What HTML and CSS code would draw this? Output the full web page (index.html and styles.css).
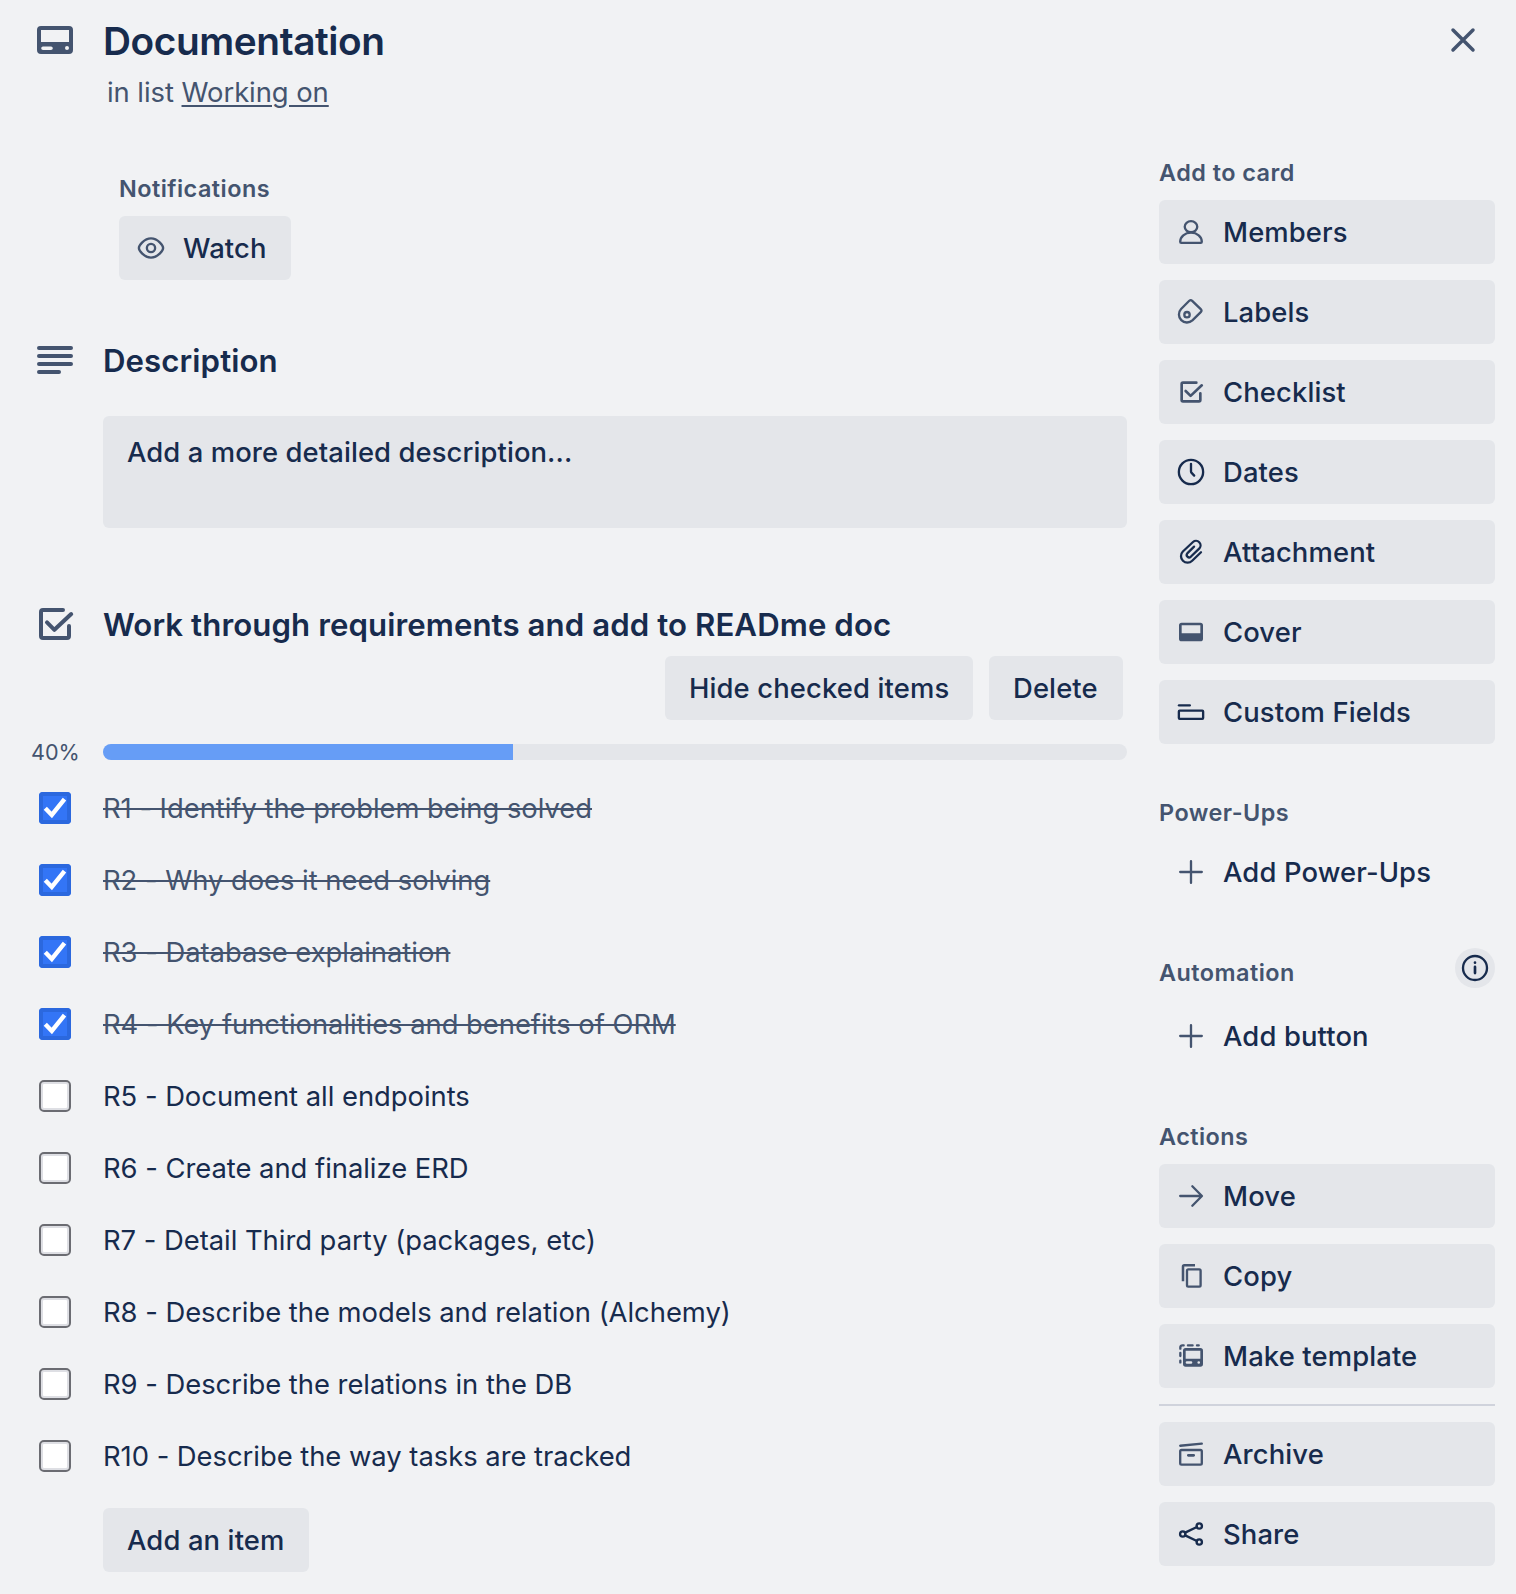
FILE: index.html
```html
<!DOCTYPE html>
<html lang="en">
<head>
<meta charset="utf-8">
<title>Documentation</title>
<link rel="stylesheet" href="styles.css">
</head>
<body>
<svg class="sprite" aria-hidden="true">
  <symbol id="i-card" viewBox="0 0 24 24"><path class="solid" fill-rule="evenodd" d="M5 5h14a2 2 0 0 1 2 2v10a2 2 0 0 1-2 2H5a2 2 0 0 1-2-2V7a2 2 0 0 1 2-2zM5 7v6h14V7zM6 15.200a.9.9 0 0 0 0 1.800h4a.9.9 0 0 0 0-1.800zM18 15a1 1 0 1 0 0 2 1 1 0 0 0 0-2z"/></symbol>
  <symbol id="i-text" viewBox="0 0 24 24"><path d="M4 6h16M4 10h16M4 14h16M4 18h10"/></symbol>
  <symbol id="i-check" viewBox="0 0 24 24"><path d="M16 5H6a1 1 0 0 0-1 1v12a1 1 0 0 0 1 1h12a1 1 0 0 0 1-1v-5M8 11.200l3.700 3.700L20.100 7"/></symbol>
  <symbol id="i-eye" viewBox="0 0 24 24"><path class="thin" d="M2.900 12c0-1.800 3.800-7.200 9.100-7.200s9.100 5.400 9.100 7.200-3.800 7.200-9.100 7.200S2.900 13.800 2.900 12z"/><circle class="thin" cx="12" cy="12" r="3.100"/></symbol>
  <symbol id="i-member" viewBox="0 0 24 24"><ellipse class="thin" cx="12" cy="8" rx="4.700" ry="4.100"/><path class="thin" d="M12 12.500c-4.600 0-8.100 3-8.100 6.800 0 .5.300.8.800.8h14.600c.5 0 .8-.3.800-.8 0-3.800-3.500-6.800-8.100-6.800z"/></symbol>
  <symbol id="i-label" viewBox="0 0 24 24"><path class="thin" d="M4.560 9.760 10.700 3.600q1.100-1 2.200 0L19.300 9.900q1.100 1.100 0 2.200L13.040 18.240A6 6 0 0 1 4.560 9.760z"/><circle class="thin" cx="9" cy="14" r="2"/></symbol>
  <symbol id="i-clock" viewBox="0 0 24 24"><circle class="thin" cx="12" cy="12" r="9.100"/><path class="thin" d="M12 5.900V11.700q0 .5.300.8l2.100 2.200"/></symbol>
  <symbol id="i-clip" viewBox="0 0 24 24"><path class="clip" d="M19.500 12.200l-6.600 6.400a4.950 4.950 0 0 1-7-7l7.600-7.100a3.400 3.400 0 0 1 4.800 4.800l-6.500 6.300a1.850 1.850 0 0 1-2.600-2.600l5.100-5"/></symbol>
  <symbol id="i-cover" viewBox="0 0 24 24"><path class="solid" fill-rule="evenodd" d="M5 5h14a2 2 0 0 1 2 2v10a2 2 0 0 1-2 2H5a2 2 0 0 1-2-2V7a2 2 0 0 1 2-2zM5 7v6h14V7z"/></symbol>
  <symbol id="i-fields" viewBox="0 0 24 24"><path class="thin" d="M3 7h8.100"/><rect class="thin" x="2.900" y="11" width="18.200" height="6.100" rx=".6"/></symbol>
  <symbol id="i-plus" viewBox="0 0 24 24"><path class="thin" d="M12 3.900v16.200M3.900 12h16.200"/></symbol>
  <symbol id="i-info" viewBox="0 0 24 24"><circle class="thin" cx="12" cy="12" r="9"/><path d="M12 11.200v4.600"/><circle class="solid" cx="12" cy="8" r="1"/></symbol>
  <symbol id="i-arrow" viewBox="0 0 24 24"><path class="thin" d="M3.900 12h16M13 4.700l7.200 7.300L13 19.300"/></symbol>
  <symbol id="i-copy" viewBox="0 0 24 24"><path class="flat" d="M6 16V5a1 1 0 0 1 1-1h8"/><rect class="thin" x="9" y="7" width="10.200" height="13" rx="1"/></symbol>
  <symbol id="i-template" viewBox="0 0 24 24"><path class="solid" fill-rule="evenodd" d="M8 6h11a2 2 0 0 1 2 2v10a2 2 0 0 1-2 2H8a2 2 0 0 1-2-2V8a2 2 0 0 1 2-2zM8 8v6h11V8zM9 15.900a1 1 0 0 0 0 2h3a1 1 0 0 0 0-2zM17.800 15.900a1 1 0 1 0 0 2 1 1 0 0 0 0-2z"/><path class="thin" d="M4 6.500V5.500A1.500 1.500 0 0 1 5.500 4H6.500M9.700 4h3.500M16.500 4h1.300M4 9.700v2.300M4 15.500v1.300"/></symbol>
  <symbol id="i-archive" viewBox="0 0 24 24"><path class="thin" d="M3.900 5.800 20.100 4.200"/><rect class="thin" x="3.900" y="9" width="16.200" height="11" rx="1"/><path d="M10 13h4"/></symbol>
  <symbol id="i-share" viewBox="0 0 24 24"><circle class="thin" cx="5.800" cy="12" r="2"/><circle class="thin" cx="18.200" cy="6" r="2"/><circle class="thin" cx="18.200" cy="18" r="2"/><path class="thin" d="M7.600 11l8.800-4.200M7.600 13l8.800 4.200"/></symbol>
  <symbol id="i-close" viewBox="0 0 24 24"><path class="thin" d="M7 7l10 10M17 7 7 17"/></symbol>
  <symbol id="i-tick" viewBox="0 0 32 32"><path class="tick" d="M6.300 16.300 12.800 23 25.500 7.200"/></symbol>
</svg>

<main class="card">
  <header class="card-head">
    <svg class="icon big"><use href="#i-card"/></svg>
    <div class="head-text">
      <h1>Documentation</h1>
      <p class="in-list">in list <a>Working on</a></p>
    </div>
    <svg class="icon big close"><use href="#i-close"/></svg>
  </header>

  <div class="columns">
    <section class="main">
      <div class="notifications">
        <h3>Notifications</h3>
        <button class="btn with-icon"><svg class="icon"><use href="#i-eye"/></svg><span>Watch</span></button>
      </div>

      <div class="section-title desc-title"><svg class="icon big"><use href="#i-text"/></svg><h2>Description</h2></div>
      <div class="desc-box">Add a more detailed description...</div>

      <div class="section-title list-title"><svg class="icon big"><use href="#i-check"/></svg><h2>Work through requirements and add to READme doc</h2></div>
      <div class="list-actions"><button class="btn">Hide checked items</button><button class="btn">Delete</button></div>
      <div class="progress"><span class="percent">40%</span><div class="track"><div class="fill" style="width:40%"></div></div></div>

      <ul class="items">
        <li class="done"><span class="box"><svg><use href="#i-tick"/></svg></span><span class="label">R1 - Identify the problem being solved</span></li>
        <li class="done"><span class="box"><svg><use href="#i-tick"/></svg></span><span class="label">R2 - Why does it need solving</span></li>
        <li class="done"><span class="box"><svg><use href="#i-tick"/></svg></span><span class="label">R3 - Database explaination</span></li>
        <li class="done"><span class="box"><svg><use href="#i-tick"/></svg></span><span class="label">R4 - Key functionalities and benefits of ORM</span></li>
        <li><span class="box"></span><span class="label">R5 - Document all endpoints</span></li>
        <li><span class="box"></span><span class="label">R6 - Create and finalize ERD</span></li>
        <li><span class="box"></span><span class="label">R7 - Detail Third party (packages, etc)</span></li>
        <li><span class="box"></span><span class="label">R8 - Describe the models and relation (Alchemy)</span></li>
        <li><span class="box"></span><span class="label">R9 - Describe the relations in the DB</span></li>
        <li><span class="box"></span><span class="label">R10 - Describe the way tasks are tracked</span></li>
      </ul>
      <button class="btn add-item">Add an item</button>
    </section>

    <aside class="side">
      <div class="group">
        <h3>Add to card</h3>
        <button class="btn with-icon"><svg class="icon"><use href="#i-member"/></svg><span>Members</span></button>
        <button class="btn with-icon"><svg class="icon"><use href="#i-label"/></svg><span>Labels</span></button>
        <button class="btn with-icon"><svg class="icon"><use href="#i-check"/></svg><span>Checklist</span></button>
        <button class="btn with-icon"><svg class="icon dark"><use href="#i-clock"/></svg><span>Dates</span></button>
        <button class="btn with-icon"><svg class="icon dark"><use href="#i-clip"/></svg><span>Attachment</span></button>
        <button class="btn with-icon"><svg class="icon"><use href="#i-cover"/></svg><span>Cover</span></button>
        <button class="btn with-icon"><svg class="icon dark"><use href="#i-fields"/></svg><span>Custom Fields</span></button>
      </div>
      <div class="group power">
        <h3>Power-Ups</h3>
        <button class="btn with-icon plain"><svg class="icon"><use href="#i-plus"/></svg><span>Add Power-Ups</span></button>
      </div>
      <div class="group automation">
        <div class="group-head"><h3>Automation</h3><span class="info"><svg class="icon dark"><use href="#i-info"/></svg></span></div>
        <button class="btn with-icon plain"><svg class="icon"><use href="#i-plus"/></svg><span>Add button</span></button>
      </div>
      <div class="group actions">
        <h3>Actions</h3>
        <button class="btn with-icon"><svg class="icon"><use href="#i-arrow"/></svg><span>Move</span></button>
        <button class="btn with-icon"><svg class="icon"><use href="#i-copy"/></svg><span>Copy</span></button>
        <button class="btn with-icon"><svg class="icon"><use href="#i-template"/></svg><span>Make template</span></button>
        <hr>
        <button class="btn with-icon"><svg class="icon"><use href="#i-archive"/></svg><span>Archive</span></button>
        <button class="btn with-icon"><svg class="icon dark"><use href="#i-share"/></svg><span>Share</span></button>
      </div>
    </aside>
  </div>
</main>
</body>
</html>
```

FILE: styles.css
```css
* { box-sizing: border-box; }

body {
  margin: 0;
  background: #f1f2f4;
  color: #172b4d;
  font-family: Inter, "Liberation Sans", sans-serif;
  font-size: 27.4px;
  line-height: 40px;
}

h1, h2, h3, p, ul { margin: 0; padding: 0; font-weight: 600; }

.sprite { position: absolute; width: 0; height: 0; }

.icon {
  display: block;
  flex: none;
  width: 32px;
  height: 32px;
  color: #44546f;
}
.icon.big { width: 48px; height: 48px; }
.icon.dark { color: #172b4d; }

symbol path, symbol circle, symbol ellipse, symbol rect {
  fill: none;
  stroke: currentColor;
  stroke-width: 2;
  stroke-linecap: round;
  stroke-linejoin: round;
}
symbol .thin { stroke-width: 1.75; }
symbol .flat { stroke-width: 1.9; stroke-linecap: butt; }
symbol .clip { stroke-width: 1.7; }
symbol .solid { fill: currentColor; stroke: none; }
symbol .tick { stroke: #fff; stroke-width: 4.4; stroke-linecap: butt; stroke-linejoin: miter; }

.card { width: 1516px; height: 1594px; padding: 16px 21px 0 31px; overflow: hidden; }

.card-head { display: flex; height: 136px; }
.head-text { flex: 1; padding-left: 24px; }
h1 { font-size: 38.8px; line-height: 50px; letter-spacing: -0.42px; }
.in-list {
  padding-left: 4px;
  margin-top: 6px;
  font-weight: 400;
  letter-spacing: -0.05px;
  color: #44546f;
}
.in-list a { text-decoration: underline; text-decoration-thickness: 2px; text-underline-offset: 3px; }
.close { margin-right: 8px; }

.columns { display: grid; grid-template-columns: 1096px 336px; column-gap: 32px; }

h3 { font-size: 23.4px; line-height: 32px; letter-spacing: 0.48px; color: #44546f; }

.btn {
  display: flex;
  align-items: center;
  height: 64px;
  padding: 0 24px;
  border: 0;
  border-radius: 6px;
  background: #e4e6ea;
  color: inherit;
  font: inherit;
  font-weight: 500;
  letter-spacing: 0.13px;
  white-space: nowrap;
}
.with-icon { gap: 16px; padding: 0 24px 0 16px; }
.notifications .btn { gap: 17px; }
.plain { background: none; }

.notifications { padding: 21px 0 0 88px; }
.notifications .btn { gap: 16px; margin-top: 11px; width: 172px; }

.section-title { display: flex; align-items: center; gap: 24px; height: 48px; }
.desc-title { margin-top: 56px; }
h2 { padding-top: 1px; font-size: 31.2px; line-height: 48px; letter-spacing: 0.08px; }

.desc-box {
  height: 112px;
  margin: 32px 0 0 72px;
  padding: 16px 24px;
  border-radius: 6px;
  background: #e4e6ea;
  font-weight: 500;
  letter-spacing: 0.09px;
}

.list-title { margin-top: 72px; }
.list-actions { display: flex; justify-content: flex-end; gap: 16px; padding-right: 4px; margin-top: 8px; }
.list-actions .btn:first-child { width: 308px; }
.list-actions .btn:last-child { width: 134px; }

.progress { display: flex; align-items: center; height: 16px; margin-top: 24px; }
.percent { width: 72px; font-size: 21.6px; color: #44546f; }
.track { flex: 1; height: 16px; border-radius: 8px; background: #e4e6ea; overflow: hidden; }
.fill { height: 16px; background: #669df6; }

.items { list-style: none; font-weight: 400; letter-spacing: -0.03px; margin-top: 12px; }
.items li { display: flex; align-items: center; gap: 32px; height: 72px; padding-left: 8px; }
.box {
  flex: none;
  width: 32px;
  height: 32px;
  border: 2px solid #6b6c72;
  border-radius: 5px;
  background: #fff;
  box-shadow: inset 0 0 0 2px #dedfe4;
}
.done .box { border: 0; border-radius: 4px; background: #3375f6; box-shadow: inset 0 0 0 4px #2b68de; }
.box svg { display: block; width: 32px; height: 32px; }
.done .label { color: #44546f; text-decoration: line-through; text-decoration-thickness: 2px; }

.add-item { width: 206px; margin: 16px 0 0 72px; }

.side { padding-top: 5px; }
.group { display: flex; flex-direction: column; gap: 16px; }
.group h3 { margin-bottom: -5px; }
.group .btn { width: 336px; }
.power { margin-top: 53px; }
.automation { margin-top: 44px; }
.group-head { display: flex; justify-content: space-between; height: 40px; }
.group-head h3 { padding-top: 9px; }
.info { display: flex; align-items: center; justify-content: center; width: 40px; height: 40px; border-radius: 50%; background: #e4e6ea; }
.actions { margin-top: 53px; }
hr { width: 336px; height: 2px; margin: 0; border: 0; background: #d0d3dc; }
```
